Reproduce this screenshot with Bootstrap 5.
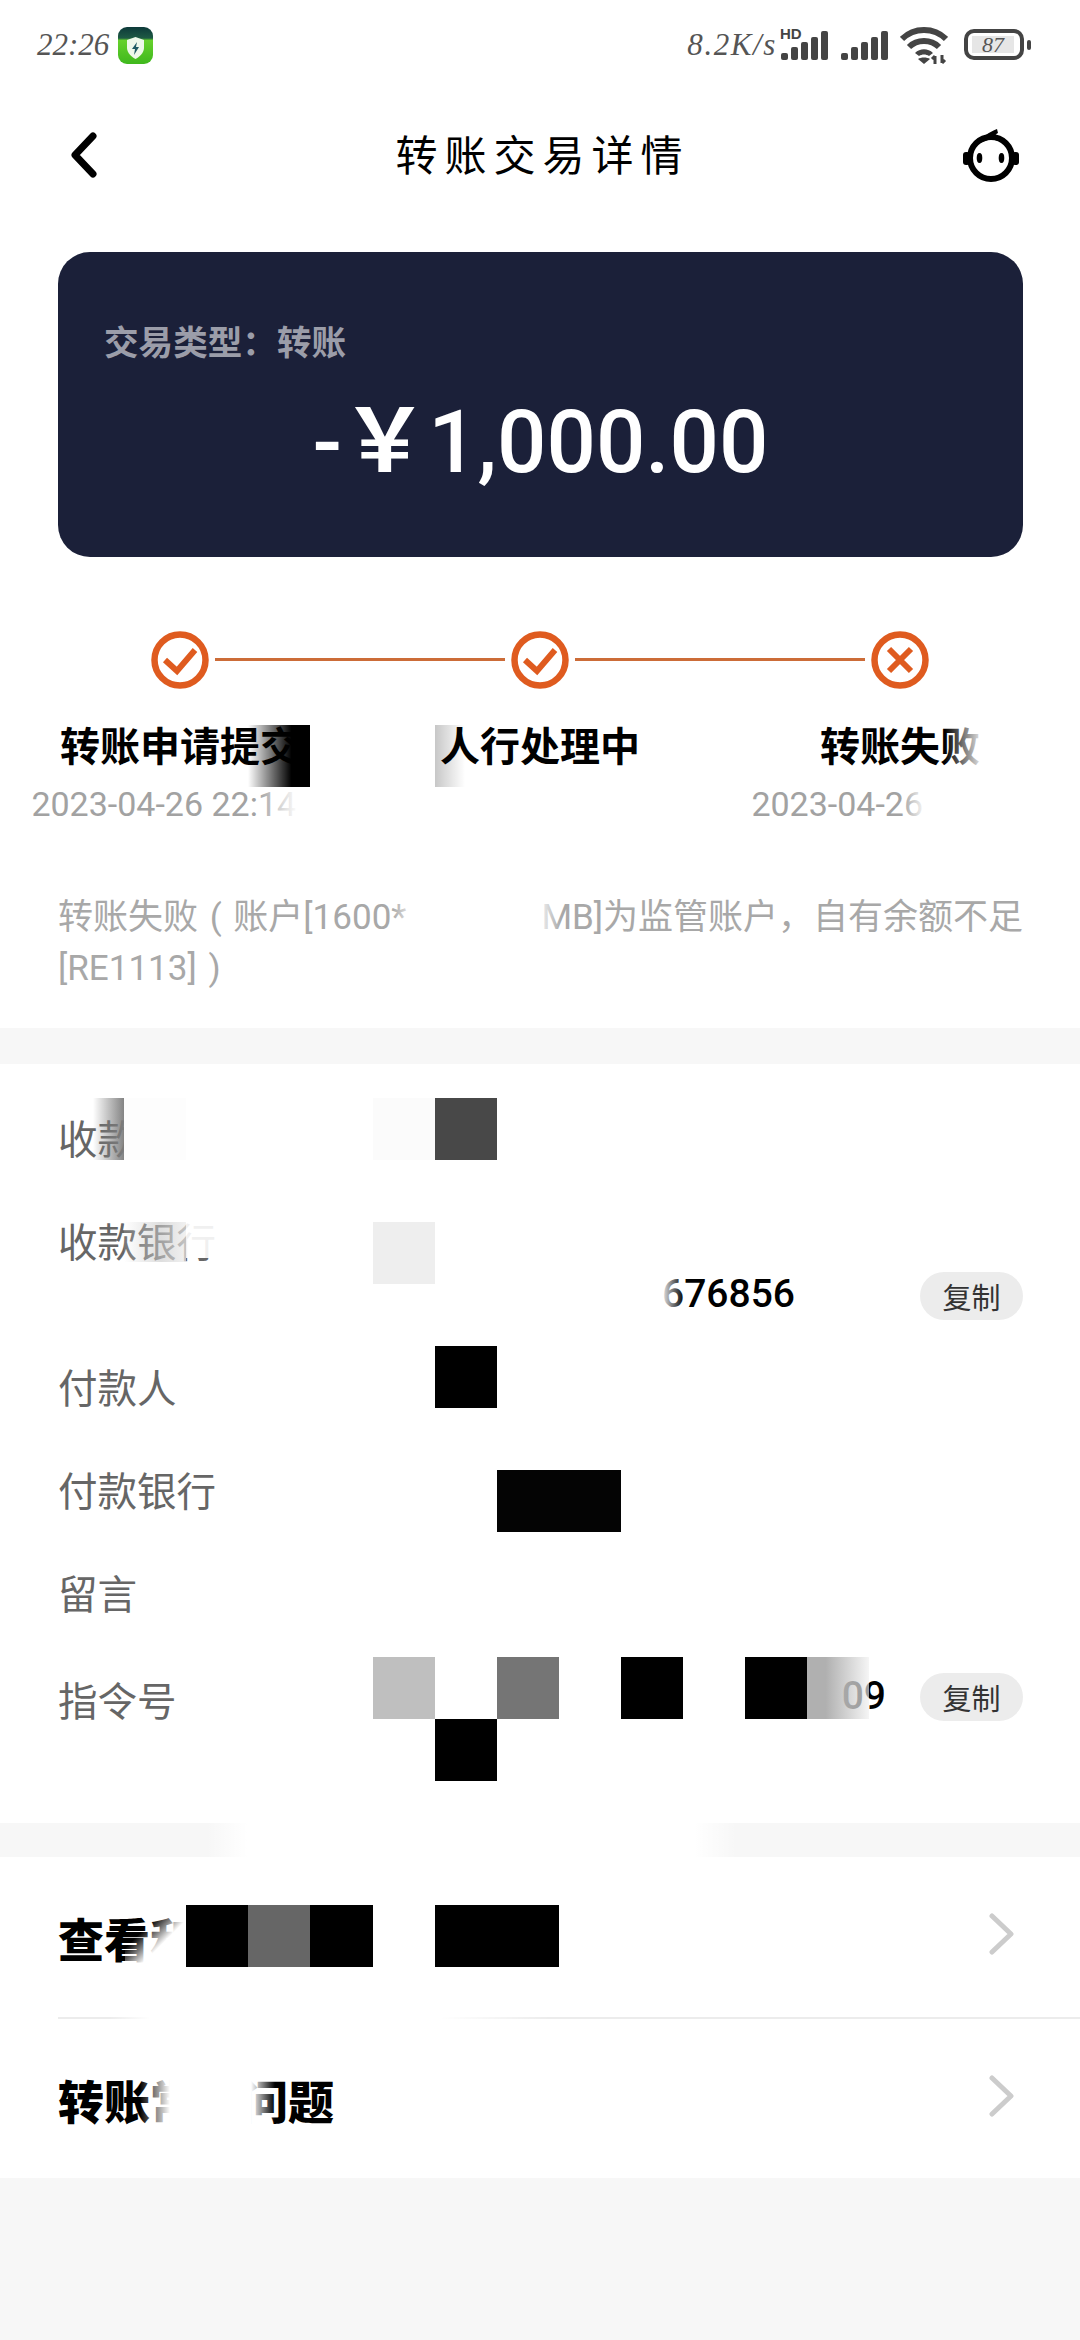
<!DOCTYPE html>
<html lang="zh-CN">
<head>
    <meta charset="UTF-8">
    <title>转账交易详情</title>
    <link href="https://cdn.jsdelivr.net/npm/bootstrap@5.3.0/dist/css/bootstrap.min.css" rel="stylesheet">
    <style>
        body { background-color: #f7f7f7; font-family: Roboto, "Noto Sans CJK SC", sans-serif; }
        .phone { position: relative; width: 1080px; height: 2340px; overflow: hidden; background: #f7f7f7; }
        .top-area { background: #fff; height: 1028px; }

        .status-row { height: 92px; padding: 26px 48px 0 37px; }
        .status-text { font-family: "Liberation Serif", serif; font-style: italic; font-size: 31px; line-height: 38px; color: #555; }
        .app-icon { margin-left: 9px; margin-top: 1px; }
        .net-speed { margin-right: 3px; font-size: 31px; letter-spacing: 1.6px; }
        .wifi-icon { margin-left: 11px; }

        .title-row { height: 126px; padding: 0 59px 0 70px; }
        .page-title { margin: 0 0 6px 26px; font-family: "Noto Sans CJK SC", sans-serif; font-size: 42px; letter-spacing: 7px; font-weight: 400; color: #000; }

        .amount-panel { height: 305px; margin: 34px 57px 0 58px; padding: 63px 46px 0; border-radius: 32px; background: #1b2039; }
        .panel-label { font-family: "Noto Sans CJK SC", sans-serif; font-size: 34.6px; line-height: 50px; font-weight: 700; color: #9b9da9; }
        .panel-amount { margin-top: 27px; font-size: 87px; line-height: 100px; font-weight: 500; color: #fff; }
        .panel-amount .yen { margin-left: -1px; font-family: "Noto Sans CJK SC", sans-serif; font-weight: 700; line-height: 0; }

        .step-line-row { height: 57px; margin-top: 74px; padding: 0 151px; }
        .step-link { flex: 1; height: 3px; margin: 0 6px; background: #cc6c38; }
        .step-labels { margin-top: 31px; }
        .step-item { width: 360px; text-align: center; }
        .step-name { font-family: "Noto Sans CJK SC", sans-serif; font-size: 40px; line-height: 50px; font-weight: 700; color: #000; }
        .step-time { margin-top: 13px; height: 44px; padding-left: 14px; font-size: 34px; line-height: 44px; color: #a2a2a2; white-space: nowrap; }
        .fail-note { margin: 66px 0 0 58px; font-family: Roboto, "Noto Sans CJK SC", sans-serif; font-size: 35px; line-height: 51px; color: #a8a8a8; white-space: nowrap; word-spacing: 3px; }
        .note-gap { display: inline-block; width: 135px; }

        .detail-area { margin-top: 36px; height: 759px; padding: 47px 57px 0 58px; background: #fff; }
        .detail-row { display: flex; align-items: flex-start; margin-bottom: 51px; }
        .detail-row.wide { height: 95px; }
        .detail-row.before-order { margin-bottom: 55px; }
        .field-name { width: 315px; flex: none; font-family: "Noto Sans CJK SC", sans-serif; font-size: 39.5px; line-height: 52px; color: #666; }
        .field-value { font-weight: 500; font-size: 39px; line-height: 46px; color: #000; text-align: right; }
        .acct-value { width: 422px; margin-top: 57px; }
        .order-value { width: 513px; margin-top: 0; }
        .copy-pill { margin-left: auto; width: 103px; height: 48px; border-radius: 24px; padding: 0; border: 0; background: #ececec; font-family: "Noto Sans CJK SC", sans-serif; font-size: 29px; line-height: 48px; color: #333; }
        .acct-pill { margin-top: 58px; }

        .link-area { margin-top: 34px; height: 321px; background: #fff; }
        .link-row { height: 160px; padding: 0 65px 0 58px; font-family: "Noto Sans CJK SC", sans-serif; font-size: 46px; font-weight: 900; color: #000; }
        .link-arrow { margin-bottom: 6px; }
        .link-rule { height: 2px; margin-left: 58px; background: #ececec; }

        /* privacy mosaic that sits over the finished page */
        .mos { position: absolute; width: 62px; height: 62px; }
        .fade-white { background: linear-gradient(to right, rgba(255,255,255,0), #fff); }
        .white-fade { background: linear-gradient(to left, rgba(255,255,255,0), #fff); }
        .m-black { background: #000; }
        .m1 { left: 248px; top: 725px; background: linear-gradient(to right, rgba(0,0,0,0), #000 70%); }
        .m2 { left: 435px; top: 725px; width: 30px; background: linear-gradient(to right, rgba(0,0,0,.22), rgba(0,0,0,0)); }
        .m3 { left: 945px; top: 725px; width: 40px; }
        .m4 { left: 258px; top: 787px; width: 40px; height: 50px; }
        .m5 { left: 298px; top: 787px; width: 62px; height: 50px; background: #fff; }
        .m6 { left: 902px; top: 787px; width: 24px; height: 50px; }
        .m7 { left: 926px; top: 787px; width: 150px; height: 50px; background: #fff; }
        .m8 { left: 392px; top: 885px; width: 26px; height: 60px; }
        .m10 { left: 537px; top: 885px; width: 24px; height: 60px; }
        .m11 { left: 93px; top: 1098px; width: 31px; background: linear-gradient(to right, rgba(120,120,120,0), rgba(125,125,125,.95)); }
        .m12 { left: 124px; top: 1098px; background: #fdfdfd; }
        .m13 { left: 373px; top: 1098px; background: #fbfbfb; }
        .m14 { left: 435px; top: 1098px; background: #484848; }
        .m15 { left: 124px; top: 1222px; height: 40px; background: linear-gradient(to right, rgba(255,255,255,.1), rgba(200,200,200,.6) 60%, rgba(235,235,235,.7)); }
        .m16 { left: 186px; top: 1222px; width: 30px; height: 36px; background: rgba(255,255,255,.9); }
        .m17 { left: 373px; top: 1222px; background: #eee; }
        .m19 { left: 660px; top: 1266px; width: 24px; height: 56px; }
        .m20 { left: 435px; top: 1346px; }
        .m21 { left: 497px; top: 1470px; width: 124px; background: #040404; }
        .m22 { left: 373px; top: 1657px; background: #bfbfbf; }
        .m23 { left: 497px; top: 1657px; background: #757575; }
        .m24 { left: 621px; top: 1657px; }
        .m25 { left: 745px; top: 1657px; }
        .m26 { left: 807px; top: 1657px; background: linear-gradient(to right, #b0b0b0 30%, rgba(240,240,240,.65)); }
        .m27 { left: 435px; top: 1719px; }
        .m28 { left: 125px; top: 1905px; width: 61px; background: linear-gradient(135deg, rgba(255,255,255,0) 35%, #fff 62%); }
        .m29 { left: 186px; top: 1905px; }
        .m30 { left: 248px; top: 1905px; background: #666; }
        .m31 { left: 310px; top: 1905px; width: 63px; }
        .m32 { left: 435px; top: 1905px; width: 124px; }
        .m33 { left: 140px; top: 2068px; width: 30px; height: 66px; }
        .m34 { left: 170px; top: 2068px; width: 81px; height: 66px; background: #fff; }
        .m35 { left: 251px; top: 2068px; width: 24px; height: 66px; }
        .m36 { left: 110px; top: 2015px; width: 40px; height: 6px; }
        .m37 { left: 150px; top: 2015px; width: 290px; height: 6px; background: #fff; }
        .m38 { left: 440px; top: 2015px; width: 110px; height: 6px; }
        .m39 { left: 207px; top: 1823px; width: 40px; height: 34px; }
        .m40 { left: 247px; top: 1823px; width: 448px; height: 34px; background: #fff; }
        .m41 { left: 695px; top: 1823px; width: 42px; height: 34px; }
    </style>
</head>
<body>
    <div class="phone">
        <div class="top-area">

            <div class="status-row d-flex align-items-start">
                <span class="status-text">22:26</span>
                <svg class="app-icon" width="35" height="37" viewBox="0 0 35 37">
                    <defs>
                        <linearGradient id="appGreen" x1="0" y1="0" x2="0" y2="1">
                            <stop offset="0" stop-color="#0d3a3a"/>
                            <stop offset=".3" stop-color="#1e5a44"/>
                            <stop offset=".36" stop-color="#66d12c"/>
                            <stop offset="1" stop-color="#3fb81d"/>
                        </linearGradient>
                    </defs>
                    <rect width="35" height="37" rx="9" fill="url(#appGreen)"/>
                    <path d="M17.5 10 L26 13 V21 C26 26 21 30 17.5 32 C14 30 9 26 9 21 V13 Z" fill="#eef8ea"/>
                    <path d="M19 15 L14 22 H17 L16 28 L21 20 H18 Z" fill="#1e5a64"/>
                </svg>
                <span class="status-text net-speed ms-auto">8.2K/s</span>
                <svg width="51" height="34" viewBox="0 0 51 34">
                    <text x="0" y="13" font-family="Liberation Sans" font-weight="700" font-size="15" fill="#444">HD</text>
                    <g fill="#444">
                        <rect x="1" y="27" width="7" height="7" rx="2"/>
                        <rect x="11" y="21" width="7" height="13" rx="2"/>
                        <rect x="21" y="16" width="7" height="18" rx="2"/>
                        <rect x="31" y="11" width="7" height="23" rx="2"/>
                        <rect x="41" y="5" width="7" height="29" rx="2"/>
                    </g>
                </svg>
                <svg class="ms-2" width="50" height="34" viewBox="0 0 50 34">
                    <g fill="#444">
                        <rect x="2" y="27" width="7" height="7" rx="2"/>
                        <rect x="12" y="21" width="7" height="13" rx="2"/>
                        <rect x="22" y="16" width="7" height="18" rx="2"/>
                        <rect x="32" y="11" width="7" height="23" rx="2"/>
                        <rect x="42" y="5" width="7" height="29" rx="2"/>
                    </g>
                </svg>
                <svg class="wifi-icon" width="48" height="38" viewBox="0 0 48 38">
                    <g fill="none" stroke="#444" stroke-width="6">
                        <path d="M2 13 C14 1 34 1 46 13"/>
                        <path d="M9 21 C17 13 31 13 39 21"/>
                    </g>
                    <path d="M15 27 C20 22 28 22 33 27 L29 30 C26 28 22 28 19 30 Z" fill="#444"/>
                    <path d="M24 38 L18 33 C21 31 27 31 30 33 Z" fill="#444"/>
                    <path d="M35 38 V30 M35 30 L32 33 M42 29 V37 M42 37 L45 34" stroke="#444" stroke-width="3" fill="none"/>
                </svg>
                <svg class="ms-3" width="68" height="34" viewBox="0 0 68 34">
                    <rect x="2" y="5" width="56" height="27" rx="8" fill="#fff" stroke="#444" stroke-width="4"/>
                    <rect x="8" y="10" width="42" height="17" fill="#e6e6e6"/>
                    <rect x="63" y="14" width="4" height="10" rx="2" fill="#444"/>
                    <text x="29" y="26" text-anchor="middle" font-family="Liberation Serif" font-style="italic" font-size="22" fill="#555">87</text>
                </svg>
            </div>

            <div class="title-row d-flex align-items-center justify-content-between">
                <svg width="28" height="46" viewBox="0 0 28 46">
                    <path d="M23 4 L5 23 L23 42" fill="none" stroke="#000" stroke-width="7" stroke-linecap="round" stroke-linejoin="round"/>
                </svg>
                <div class="page-title">转账交易详情</div>
                <svg width="60" height="56" viewBox="0 0 60 56">
                    <circle cx="30" cy="31" r="21" fill="none" stroke="#000" stroke-width="6"/>
                    <path d="M14 18 C21 10 28 5 36 2 L37 6 C33 8 33 11 38 14 L30 12 Z" fill="#000"/>
                    <rect x="2" y="25" width="7" height="13" rx="3" fill="#000"/>
                    <rect x="51" y="25" width="7" height="13" rx="3" fill="#000"/>
                    <ellipse cx="18.5" cy="31" rx="2.8" ry="5" fill="#000"/>
                    <ellipse cx="40.5" cy="31" rx="2.8" ry="5" fill="#000"/>
                </svg>
            </div>

            <div class="amount-panel">
                <div class="panel-label">交易类型：转账</div>
                <div class="panel-amount text-center">-<span class="yen">￥</span>1,000.00</div>
            </div>

            <div class="step-line-row d-flex align-items-center">
                <svg width="58" height="58" viewBox="0 0 58 58">
                    <circle cx="29" cy="29" r="25.5" fill="none" stroke="#df5b1f" stroke-width="6.5"/>
                    <path d="M14 29 L26 40 L44 19" fill="none" stroke="#df5b1f" stroke-width="6"/>
                </svg>
                <div class="step-link"></div>
                <svg width="58" height="58" viewBox="0 0 58 58">
                    <circle cx="29" cy="29" r="25.5" fill="none" stroke="#df5b1f" stroke-width="6.5"/>
                    <path d="M14 29 L26 40 L44 19" fill="none" stroke="#df5b1f" stroke-width="6"/>
                </svg>
                <div class="step-link"></div>
                <svg width="58" height="58" viewBox="0 0 58 58">
                    <circle cx="29" cy="29" r="25.5" fill="none" stroke="#df5b1f" stroke-width="6.5"/>
                    <path d="M18 18 L40 40 M40 18 L18 40" fill="none" stroke="#df5b1f" stroke-width="6"/>
                </svg>
            </div>

            <div class="step-labels d-flex">
                <div class="step-item">
                    <div class="step-name">转账申请提交</div>
                    <div class="step-time">2023-04-26 22:14:06</div>
                </div>
                <div class="step-item">
                    <div class="step-name">人行处理中</div>
                    <div class="step-time"></div>
                </div>
                <div class="step-item">
                    <div class="step-name">转账失败</div>
                    <div class="step-time">2023-04-26 22:14:06</div>
                </div>
            </div>

            <div class="fail-note">转账失败 ( 账户[1600*<span class="note-gap"></span>MB]为监管账户，自有余额不足<br>[RE1113] )</div>
        </div>

        <div class="detail-area">
            <div class="detail-row">
                <div class="field-name">收款人</div>
            </div>
            <div class="detail-row wide">
                <div class="field-name">收款银行</div>
                <div class="field-value acct-value">676856</div>
                <button class="copy-pill acct-pill" type="button">复制</button>
            </div>
            <div class="detail-row">
                <div class="field-name">付款人</div>
            </div>
            <div class="detail-row">
                <div class="field-name">付款银行</div>
            </div>
            <div class="detail-row before-order">
                <div class="field-name">留言</div>
            </div>
            <div class="detail-row">
                <div class="field-name">指令号</div>
                <div class="field-value order-value">09</div>
                <button class="copy-pill" type="button">复制</button>
            </div>
        </div>

        <div class="link-area">
            <div class="link-row d-flex align-items-center justify-content-between">
                <span>查看和</span>
                <svg class="link-arrow" width="26" height="42" viewBox="0 0 26 42">
                    <path d="M3 3 L22 21 L3 39" fill="none" stroke="#ccc" stroke-width="5" stroke-linecap="round" stroke-linejoin="round"/>
                </svg>
            </div>
            <div class="link-rule"></div>
            <div class="link-row d-flex align-items-center justify-content-between">
                <span>转账常见问题</span>
                <svg class="link-arrow" width="26" height="42" viewBox="0 0 26 42">
                    <path d="M3 3 L22 21 L3 39" fill="none" stroke="#ccc" stroke-width="5" stroke-linecap="round" stroke-linejoin="round"/>
                </svg>
            </div>
        </div>

        <div class="mos m1"></div>
        <div class="mos m2"></div>
        <div class="mos m3 fade-white"></div>
        <div class="mos m4 fade-white"></div>
        <div class="mos m5"></div>
        <div class="mos m6 fade-white"></div>
        <div class="mos m7"></div>
        <div class="mos m8 fade-white"></div>
        <div class="mos m10 white-fade"></div>
        <div class="mos m11"></div>
        <div class="mos m12"></div>
        <div class="mos m13"></div>
        <div class="mos m14"></div>
        <div class="mos m15"></div>
        <div class="mos m16"></div>
        <div class="mos m17"></div>
        <div class="mos m19 white-fade"></div>
        <div class="mos m20 m-black"></div>
        <div class="mos m21"></div>
        <div class="mos m22"></div>
        <div class="mos m23"></div>
        <div class="mos m24 m-black"></div>
        <div class="mos m25 m-black"></div>
        <div class="mos m26"></div>
        <div class="mos m27 m-black"></div>
        <div class="mos m28"></div>
        <div class="mos m29 m-black"></div>
        <div class="mos m30"></div>
        <div class="mos m31 m-black"></div>
        <div class="mos m32 m-black"></div>
        <div class="mos m33 fade-white"></div>
        <div class="mos m34"></div>
        <div class="mos m35 white-fade"></div>
        <div class="mos m36 fade-white"></div>
        <div class="mos m37"></div>
        <div class="mos m38 white-fade"></div>
        <div class="mos m39 fade-white"></div>
        <div class="mos m40"></div>
        <div class="mos m41 white-fade"></div>
    </div>

    <script src="https://cdn.jsdelivr.net/npm/bootstrap@5.3.0/dist/js/bootstrap.bundle.min.js"></script>
</body>
</html>
